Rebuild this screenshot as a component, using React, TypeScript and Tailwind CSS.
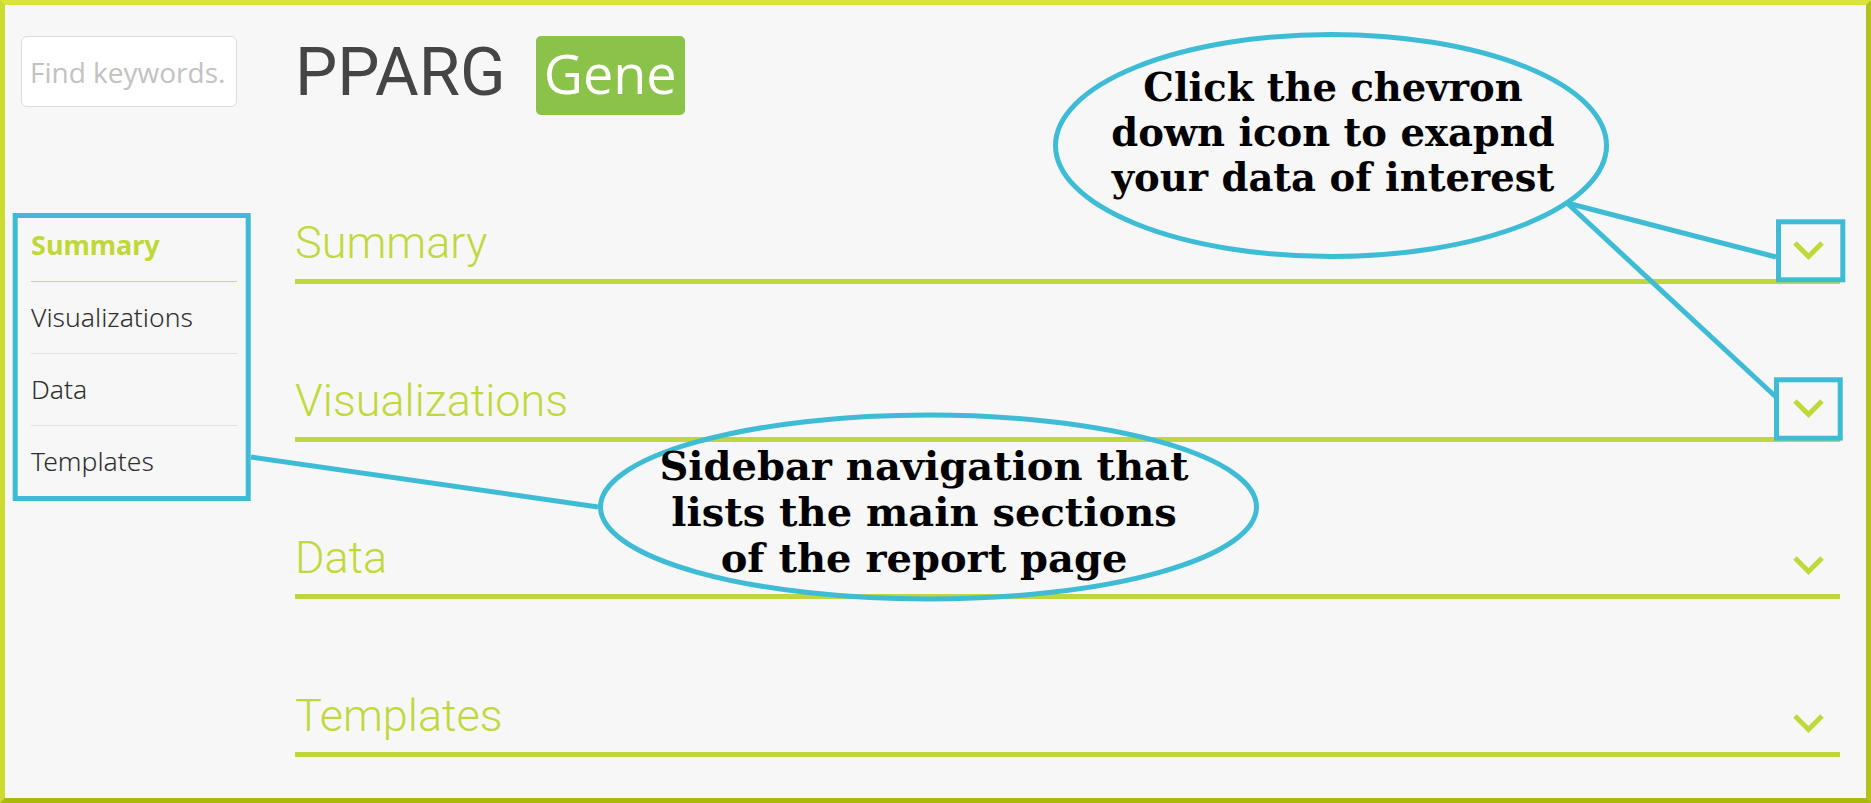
import React from "react";

const Chevron = () => (
  <svg width="31" height="19" viewBox="0 0 31 19" className="mb-[9px] shrink-0 overflow-visible">
    <polyline points="2,2 15.5,15.5 29,2" fill="none" stroke="#bfd83a" strokeWidth="5" />
  </svg>
);

const sections = ["Summary", "Visualizations", "Data", "Templates"];

export default function App() {
  return (
    <div className="relative h-[803px] w-full overflow-hidden">
      <div className="box-border flex h-full w-full border-[5px] border-t-[#d9e53a] border-l-[#cbdb2f] border-r-[#b2c21a] border-b-[#aab80b] bg-[#f7f7f7] pt-[31px] pr-[26px]">
        <aside className="w-[290px] shrink-0 pl-4">
          <input
            className="box-border block h-[71px] w-[216px] rounded-[6px] border border-[#dcdcdc] bg-white pl-[8px] font-['Open_Sans'] text-[28px] text-[#555] outline-none placeholder:text-[#c2c2c2]"
            placeholder="Find keywords."
          />
          <nav className="ml-[10px] mt-[103px] w-[206px] font-['Noto_Sans','Open_Sans',sans-serif] text-[26.5px] leading-[36px]">
            <div className="border-b border-[#c9dc72] pt-[17px] pb-[18px] text-[27px] font-bold text-[#c0d73a]">Summary</div>
            <div className="border-b border-[#e2e2e2] pt-[17px] pb-[18px] font-light text-[#2e2e2e]">Visualizations</div>
            <div className="border-b border-[#e2e2e2] pt-[17px] pb-[18px] font-light text-[#2e2e2e]">Data</div>
            <div className="border-b border-[#e2e2e2] pt-[17px] pb-[18px] font-light text-[#2e2e2e]">Templates</div>
          </nav>
        </aside>
        <main className="min-w-0 flex-1">
          <div className="flex h-[79px] items-start">
            <h1 className="mt-[3px] font-['Roboto'] text-[67px] font-normal leading-[67px] text-[#454545]">PPARG</h1>
            <span className="ml-[30px] h-[79px] w-[149px] rounded-[5px] bg-[#8bc34a] pb-[5px] text-center font-['Open_Sans'] text-[54px] leading-[74px] text-white">
              Gene
            </span>
          </div>
          <div className="mt-[102px] flex flex-col gap-[90.7px]">
            {sections.map((s) => (
              <div key={s} className="flex items-end justify-between border-b-[5px] border-[#bfd73a] pb-[10px] pr-[16px]">
                <h2 className="font-['Roboto'] text-[45px] font-light leading-[52px] text-[#c1d83d]">{s}</h2>
                <Chevron />
              </div>
            ))}
          </div>
        </main>
      </div>

      {/* annotation overlay */}
      <svg className="pointer-events-none absolute left-0 top-0" width="1871" height="803" viewBox="0 0 1871 803">
        <g fill="none" stroke="#3ebcd5" strokeWidth="5">
          <rect x="15.2" y="215.5" width="233" height="283" />
          <rect x="1778.5" y="221.8" width="64.3" height="58" />
          <rect x="1776.5" y="379.8" width="63.7" height="58.4" />
          <ellipse cx="1331" cy="145.5" rx="275.5" ry="111" />
          <ellipse cx="928.5" cy="507" rx="328" ry="92" />
          <line x1="1567" y1="203" x2="1776" y2="257" />
          <line x1="1567" y1="203" x2="1776" y2="397" />
          <line x1="251" y1="457" x2="598" y2="507" />
        </g>
      </svg>
      <div className="pointer-events-none absolute left-[1073px] top-[65px] w-[520px] text-center font-['DejaVu_Serif',serif] text-[38.5px] font-bold leading-[45px] text-black">
        Click the chevron
        <br />
        down icon to exapnd
        <br />
        your data of interest
      </div>
      <div className="pointer-events-none absolute left-[634px] top-[442.5px] w-[580px] text-center font-['DejaVu_Serif',serif] text-[40px] font-bold leading-[46px] text-black">
        Sidebar navigation that
        <br />
        lists the main sections
        <br />
        of the report page
      </div>
    </div>
  );
}
